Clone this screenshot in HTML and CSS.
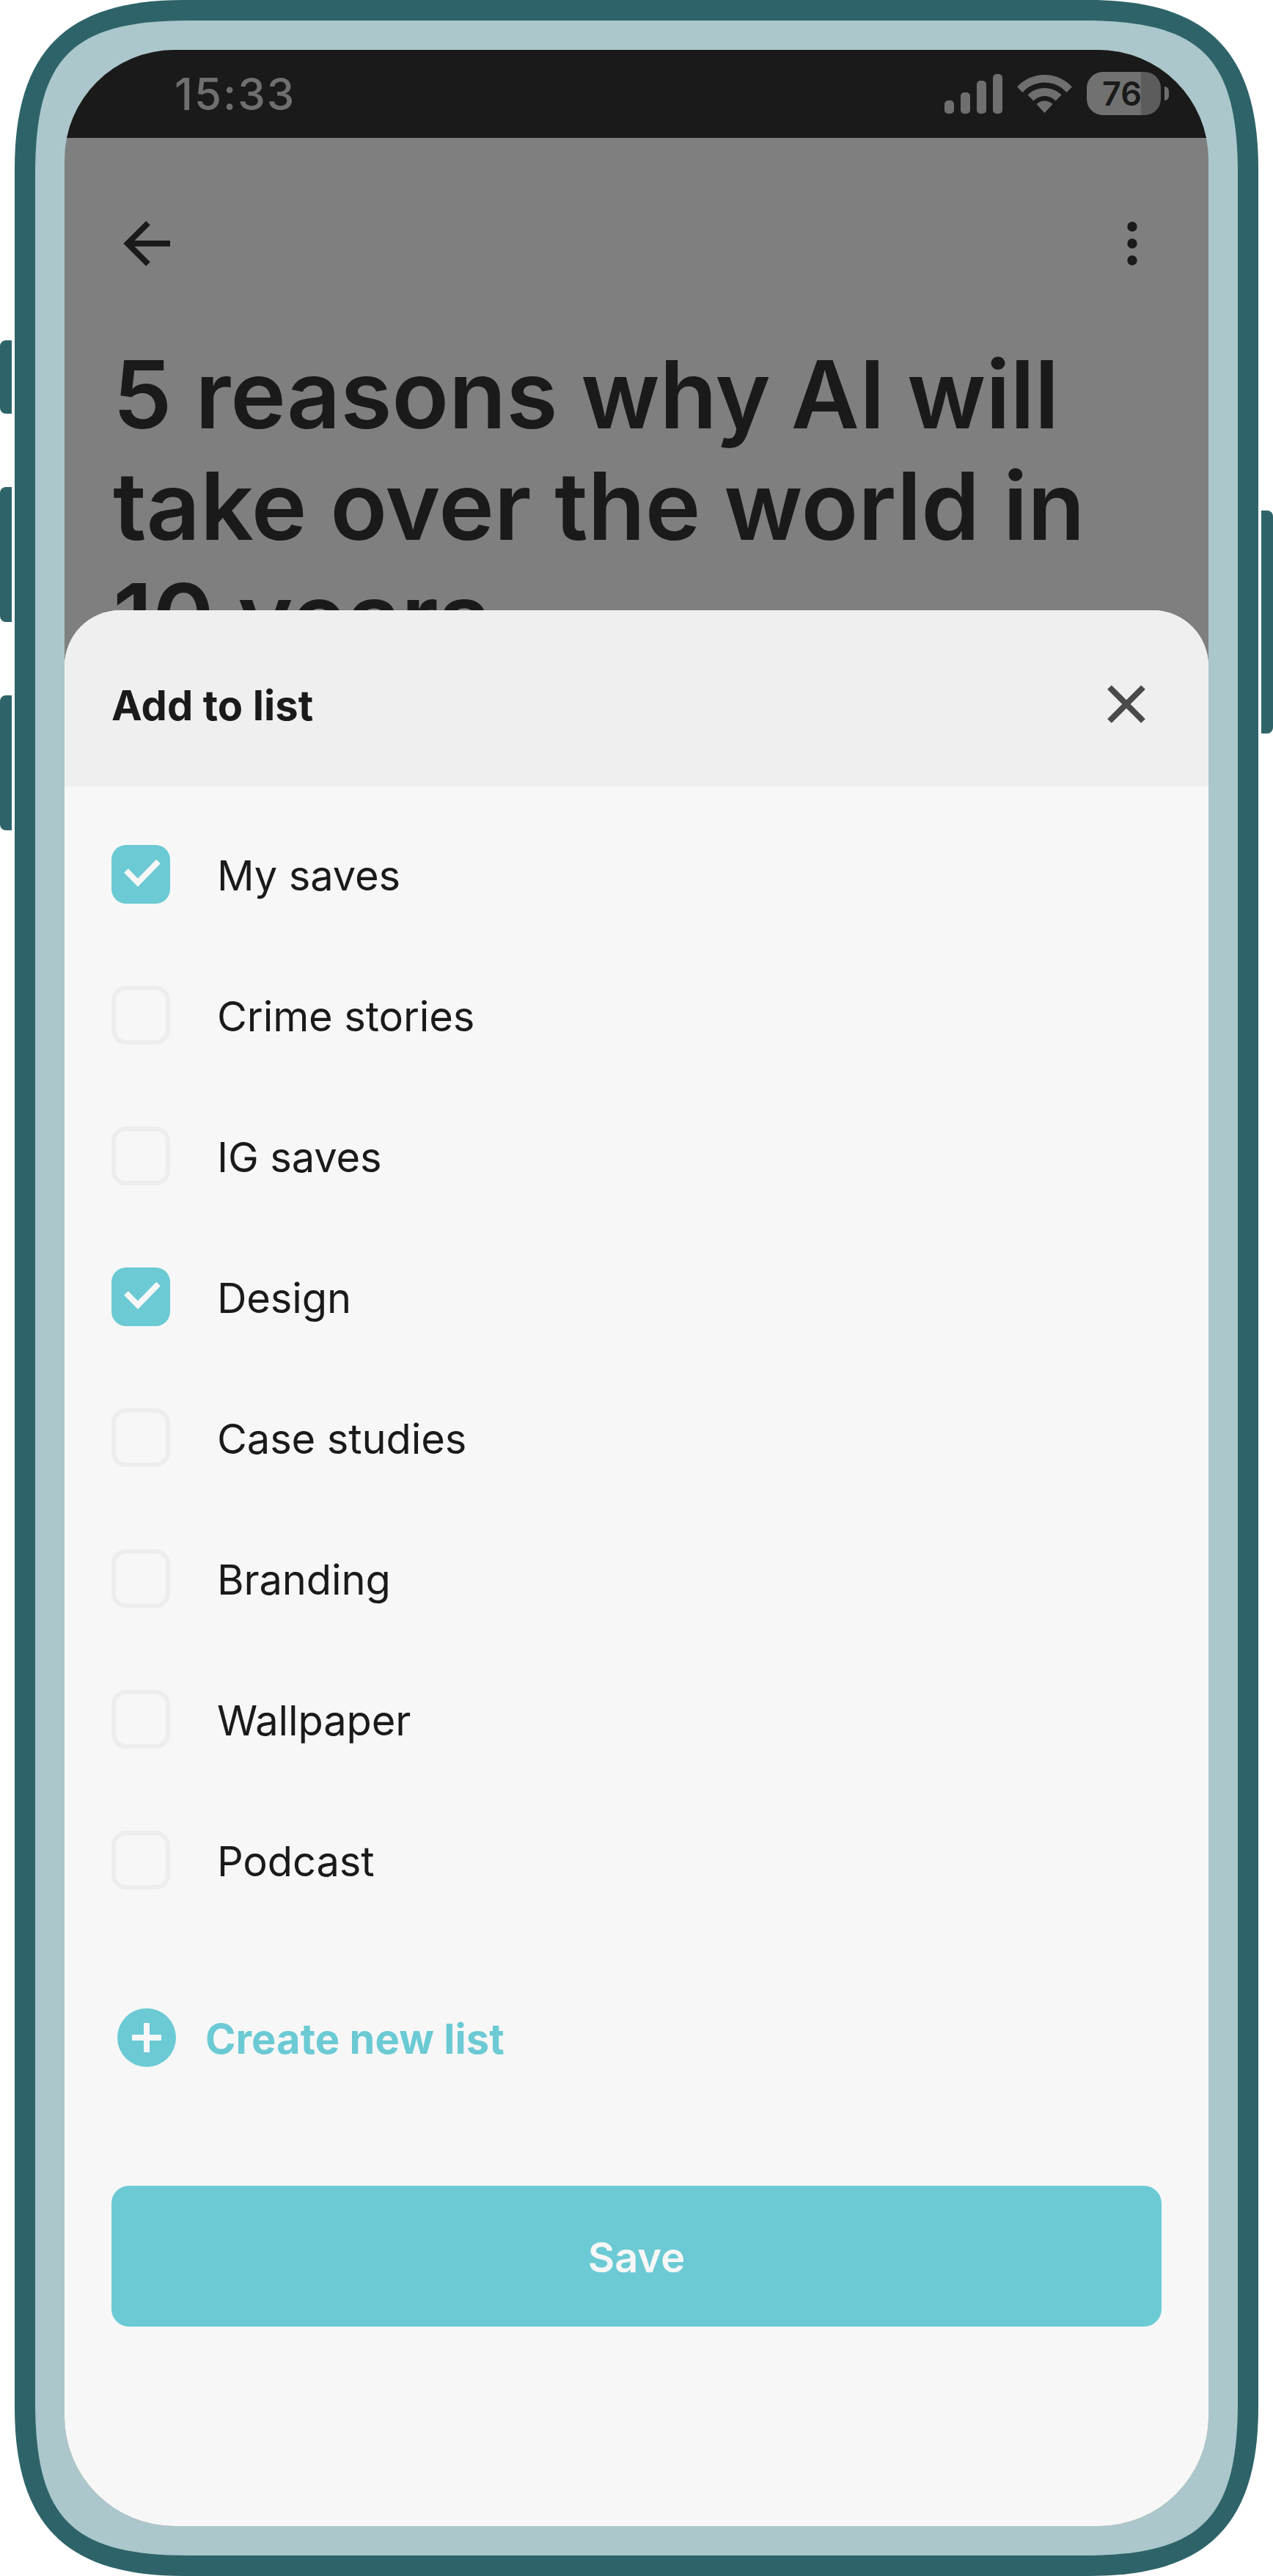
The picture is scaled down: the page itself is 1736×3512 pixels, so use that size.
FILE: index.html
```html
<!DOCTYPE html>
<html lang="en">
<head>
<meta charset="utf-8">
<title>Add to list</title>
<link rel="stylesheet" href="styles.css">
</head>
<body>
<div class="device">
  <span class="side-key key-a"></span>
  <span class="side-key key-b"></span>
  <span class="side-key key-c"></span>
  <span class="side-key key-d"></span>
  <div class="frame">
    <div class="bezel">
      <div class="screen">
        <header class="status">
          <span class="time">15:33</span>
          <div class="status-icons">
            <div class="signal">
              <span class="bar bar-1"></span>
              <span class="bar bar-2"></span>
              <span class="bar bar-3"></span>
              <span class="bar bar-4"></span>
            </div>
            <svg class="wifi" viewBox="0 0 75 52" width="75" height="52">
              <path d="M37.5 0C52 0 65.500 6 75 16.500L67.500 24C60 15.500 49.500 10.500 37.500 10.500S15 15.500 7.500 24L0 16.500C9.500 6 23 0 37.500 0Z"/>
              <path d="M37.500 18C46.500 18 54.500 21.500 60.500 27.500L52.500 35.500C48.500 31.500 43.500 29 37.500 29S26.500 31.500 22.500 35.500L14.500 27.500C20.500 21.500 28.500 18 37.500 18Z"/>
              <path d="M37.500 35.500C42 35.500 45.500 37 48.500 40L37.500 52L26.500 40C29.500 37 33 35.500 37.500 35.500Z"/>
            </svg>
            <div class="battery">
              <div class="battery-body"><span class="battery-level">76</span></div>
              <span class="battery-nub"></span>
            </div>
          </div>
        </header>
        <div class="article">
          <div class="appbar">
            <svg class="icon-back" viewBox="0 0 64 62" width="64" height="62">
              <path d="M64 31H6M34 3L6 31L34 59" fill="none" stroke="#1a1a1a" stroke-width="8"/>
            </svg>
            <svg class="icon-more" viewBox="0 0 14 60" width="14" height="60">
              <circle cx="7" cy="7" r="6.700"/>
              <circle cx="7" cy="30" r="6.700"/>
              <circle cx="7" cy="53" r="6.700"/>
            </svg>
          </div>
          <h1 class="title">5 reasons why <span class="kern-ai">AI</span> <span class="kern-will">will</span> take over the world in 10 years</h1>
        </div>
        <section class="sheet">
          <div class="sheet-head">
            <h2 class="sheet-title">Add to list</h2>
            <svg class="icon-close" viewBox="0 0 52 52" width="52" height="52">
              <path d="M3 3L49 49M49 3L3 49" fill="none" stroke="#4a4a4a" stroke-width="8"/>
            </svg>
          </div>
          <div class="sheet-body">
            <ul class="lists">
              <li class="list-row">
                <span class="check is-on"><svg viewBox="0 0 80 80" width="80" height="80"><path d="M20 35L36 51.300L64 22.500" fill="none" stroke="#f7f7f7" stroke-width="8"/></svg></span>
                <span class="list-name">My saves</span>
              </li>
              <li class="list-row"><span class="check"></span><span class="list-name">Crime stories</span></li>
              <li class="list-row"><span class="check"></span><span class="list-name">IG saves</span></li>
              <li class="list-row">
                <span class="check is-on"><svg viewBox="0 0 80 80" width="80" height="80"><path d="M20 35L36 51.300L64 22.500" fill="none" stroke="#f7f7f7" stroke-width="8"/></svg></span>
                <span class="list-name">Design</span>
              </li>
              <li class="list-row"><span class="check"></span><span class="list-name">Case studies</span></li>
              <li class="list-row"><span class="check"></span><span class="list-name">Branding</span></li>
              <li class="list-row"><span class="check"></span><span class="list-name">Wallpaper</span></li>
              <li class="list-row"><span class="check"></span><span class="list-name">Podcast</span></li>
            </ul>
            <div class="create">
              <svg class="icon-plus" viewBox="0 0 96 96" width="96" height="96">
                <circle cx="48" cy="48" r="40" fill="#6bcad4"/>
                <path d="M28 48H68M48 28V68" fill="none" stroke="#f7f7f7" stroke-width="8"/>
              </svg>
              <span class="create-label">Create new list</span>
            </div>
            <button class="save" type="button">Save</button>
          </div>
        </section>
      </div>
    </div>
  </div>
</div>
</body>
</html>
```
FILE: styles.css
```css
* { box-sizing: border-box; }
html, body { margin: 0; padding: 0; background: #fff; }
body { font-family: Inter, "Liberation Sans", sans-serif; color: #1a1a1a; }

.device { position: relative; width: 1736px; height: 3512px; padding: 0 20px; }

.side-key { position: absolute; width: 16px; background: #2e6469; }
.key-a { left: 0; top: 464px; height: 100px; border-radius: 8px 0 0 8px; }
.key-b { left: 0; top: 664px; height: 184px; border-radius: 8px 0 0 8px; }
.key-c { left: 0; top: 948px; height: 184px; border-radius: 8px 0 0 8px; }
.key-d { right: 0; top: 696px; height: 304px; border-radius: 0 8px 8px 0; }

.frame {
  width: 1696px; height: 3512px; padding: 28px;
  background: #2e6469;
  clip-path: path("M0 230C0 70 70 0 230 0H1466C1626 0 1696 70 1696 230V3282C1696 3442 1626 3512 1466 3512H230C70 3512 0 3442 0 3282Z");
}
.bezel {
  width: 1640px; height: 3456px; padding: 40px;
  background: #abc7cb;
  clip-path: path("M0 210C0 50 50 0 210 0H1430C1590 0 1640 50 1640 210V3246C1640 3406 1590 3456 1430 3456H210C50 3456 0 3406 0 3246Z");
}
.screen {
  position: relative; width: 1560px; height: 3376px;
  background: #7f7f7f; border-radius: 150px; overflow: hidden;
}

.status {
  height: 120px; background: #1a1a1a; color: #6f6f6f;
  display: flex; align-items: center; justify-content: space-between;
  padding: 0 54px 0 150px;
}
.time { font-size: 60px; font-weight: 500; line-height: 60px; letter-spacing: 2px; }
.status-icons { display: flex; align-items: flex-end; margin-top: -3px; }

.signal { display: flex; align-items: flex-end; gap: 9px; height: 54px; }
.bar { width: 13px; background: #6f6f6f; border-radius: 5px; }
.bar-1 { height: 18px; }
.bar-2 { height: 29px; }
.bar-3 { height: 45px; }
.bar-4 { height: 54px; }

.wifi { fill: #6f6f6f; margin: 0 20px 1px 20px; display: block; }

.battery { display: flex; align-items: center; gap: 5px; margin-bottom: -2px; }
.battery-body {
  width: 101px; height: 59px; border-radius: 22px;
  background: linear-gradient(90deg, #717171 0, #717171 74px, #5c5c5c 74px);
  display: flex; align-items: center; padding-left: 21px;
}
.battery-level { font-size: 45px; font-weight: 600; line-height: 45px; color: #1a1a1a; }
.battery-nub {
  width: 6px; height: 19px; background: #6f6f6f;
  border-radius: 0 10px 10px 0;
}

.article { padding: 0 64px; }
.appbar {
  display: flex; align-items: center; justify-content: space-between;
  height: 62px; margin-top: 113px; padding: 0 33px 0 16px;
}
.icon-back { display: block; }
.icon-more { fill: #1a1a1a; display: block; }
.title {
  margin: 99px 0 0 2px; font-size: 128px; line-height: 152px;
  font-weight: 600; color: #1a1a1a; letter-spacing: -0.2px;
}
.kern-ai { margin-left: -4px; }
.kern-will { margin-left: -2px; }

.sheet {
  position: absolute; left: 0; right: 0; top: 764px; bottom: 0;
  background: #f7f7f7; border-radius: 76px 76px 0 0; overflow: hidden;
}
.sheet-head {
  height: 240px; background: #efefef;
  display: flex; align-items: center; justify-content: space-between;
  padding: 15px 86px 0 64px;
}
.sheet-title { margin: 0; padding-top: 4px; font-size: 56px; line-height: 68px; font-weight: 700; color: #1a1a1a; letter-spacing: 0.1px; }
.icon-close { display: block; }

.sheet-body { padding: 80px 64px 0; }
.lists { list-style: none; margin: 0; padding: 0; display: flex; flex-direction: column; gap: 112px; }
.list-row { display: flex; align-items: center; gap: 64px; height: 80px; }
.check {
  display: block; width: 80px; height: 80px; flex: none;
  border: 6px solid #ededed; border-radius: 20px;
}
.check.is-on { background: #6bcad4; border: 0; }
.check svg { display: block; }
.list-name { font-size: 56px; line-height: 68px; font-weight: 400; color: #1a1a1a; padding-top: 4px; letter-spacing: -0.1px; }

.create { display: flex; align-items: center; gap: 32px; margin-top: 154px; }
.icon-plus { display: block; flex: none; }
.create-label { font-size: 56px; line-height: 68px; font-weight: 700; color: #6bcad4; padding-top: 4px; letter-spacing: 0.1px; }

.save {
  display: block; width: 100%; height: 192px; margin-top: 154px; padding-top: 4px;
  background: #6bcad4; color: #f7f7f7; border: 0; border-radius: 24px;
  font-family: inherit; font-size: 56px; font-weight: 600;
}
```
